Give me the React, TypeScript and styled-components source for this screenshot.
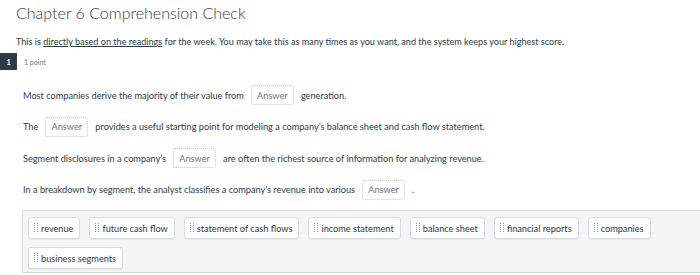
import React from 'react';
import styled, { createGlobalStyle } from 'styled-components';

const GlobalStyle = createGlobalStyle`
  body {
    margin: 0;
    background: #ffffff;
    font-family: Lato, "Liberation Sans", sans-serif;
    color: #2d3b45;
  }
`;

type Part = { text?: string; answer?: boolean };

const questions: Part[][] = [
    [{ text: 'Most companies derive the majority of their value from' }, { answer: true }, { text: 'generation.' }],
    [{ text: 'The' }, { answer: true }, { text: 'provides a useful starting point for modeling a company’s balance sheet and cash flow statement.' }],
    [{ text: 'Segment disclosures in a company’s' }, { answer: true }, { text: 'are often the richest source of information for analyzing revenue.' }],
    [{ text: 'In a breakdown by segment, the analyst classifies a company’s revenue into various' }, { answer: true }, { text: '.' }],
];

const tiles = [
    'revenue',
    'future cash flow',
    'statement of cash flows',
    'income statement',
    'balance sheet',
    'financial reports',
    'companies',
    'business segments',
];

const App: React.FC = () => {
    return (
        <Page>
            <GlobalStyle />
            <Title>Chapter 6 Comprehension Check</Title>
            <Description>
                This is <u>directly based on the readings</u> for the week. You may take this as many times as you want, and the system keeps your highest score.
            </Description>
            <QuestionHeader>
                <Badge>1</Badge>
                <Points>1 point</Points>
            </QuestionHeader>
            <QuestionBody>
                {questions.map((parts, i) => (
                    <Line key={i}>
                        {parts.map((p, j) =>
                            p.answer ? <AnswerBox key={j}>Answer</AnswerBox> : <span key={j}>{p.text}</span>
                        )}
                    </Line>
                ))}
            </QuestionBody>
            <Tray>
                {tiles.map((t) => (
                    <Tile key={t}>
                        <Handle viewBox="0 0 4 10" width="4" height="10">
                            {[0, 1, 2, 3, 4].map((r) => (
                                <g key={r}>
                                    <rect x="0" y={r * 2} width="1" height="1" fill="#8a949b" />
                                    <rect x="3" y={r * 2} width="1" height="1" fill="#8a949b" />
                                </g>
                            ))}
                        </Handle>
                        {t}
                    </Tile>
                ))}
            </Tray>
        </Page>
    );
};

const Page = styled.div`
  width: 700px;
  height: 275px;
  overflow: hidden;
  box-sizing: border-box;
  padding-top: 2px;
`;

const Title = styled.h1`
  margin: 0 0 0 16px;
  font-size: 16px;
  font-weight: 300;
  line-height: 22px;
  color: #333a40;
`;

const Description = styled.p`
  margin: 12px 0 0 16px;
  font-size: 9.1px;
  line-height: 12px;
  white-space: nowrap;
`;

const QuestionHeader = styled.div`
  display: flex;
  align-items: center;
  gap: 7px;
  margin-top: 5px;
`;

const Badge = styled.div`
  width: 17px;
  height: 17px;
  background: #2d3b45;
  color: #ffffff;
  font-size: 8px;
  font-weight: 700;
  display: flex;
  align-items: center;
  justify-content: center;
`;

const Points = styled.span`
  font-size: 7px;
  color: #6b7780;
`;

const QuestionBody = styled.div`
  display: flex;
  flex-direction: column;
  gap: 11px;
  padding: 15px 0 0 23px;
`;

const Line = styled.div`
  display: flex;
  align-items: center;
  gap: 7px;
  font-size: 9.2px;
  height: 20.5px;
  white-space: nowrap;
`;

const AnswerBox = styled.span`
  height: 20px;
  width: 43px;
  box-sizing: border-box;
  border: 1px dotted #c3c9cd;
  border-radius: 2px;
  display: flex;
  align-items: center;
  justify-content: center;
  color: #6b7780;
  font-size: 9.2px;
`;

const Tray = styled.div`
  margin: 10px 0 0 22px;
  width: 700px;
  box-sizing: border-box;
  border: 1px solid #dadcdd;
  background: #f5f5f5;
  padding: 6px 5px 5px;
  display: flex;
  flex-wrap: wrap;
  align-content: flex-start;
  column-gap: 9px;
  row-gap: 8px;
  height: 63px;
`;

const Tile = styled.div`
  display: flex;
  align-items: center;
  gap: 3px;
  height: 22px;
  box-sizing: border-box;
  padding: 0 6px 0 5px;
  background: #ffffff;
  border: 1px solid #d9dcde;
  border-radius: 3px;
  box-shadow: 0 1px 1px rgba(0, 0, 0, 0.06);
  font-size: 9.2px;
  color: #2d3b45;
`;

const Handle = styled.svg`
  flex-shrink: 0;
`;

export default App;
